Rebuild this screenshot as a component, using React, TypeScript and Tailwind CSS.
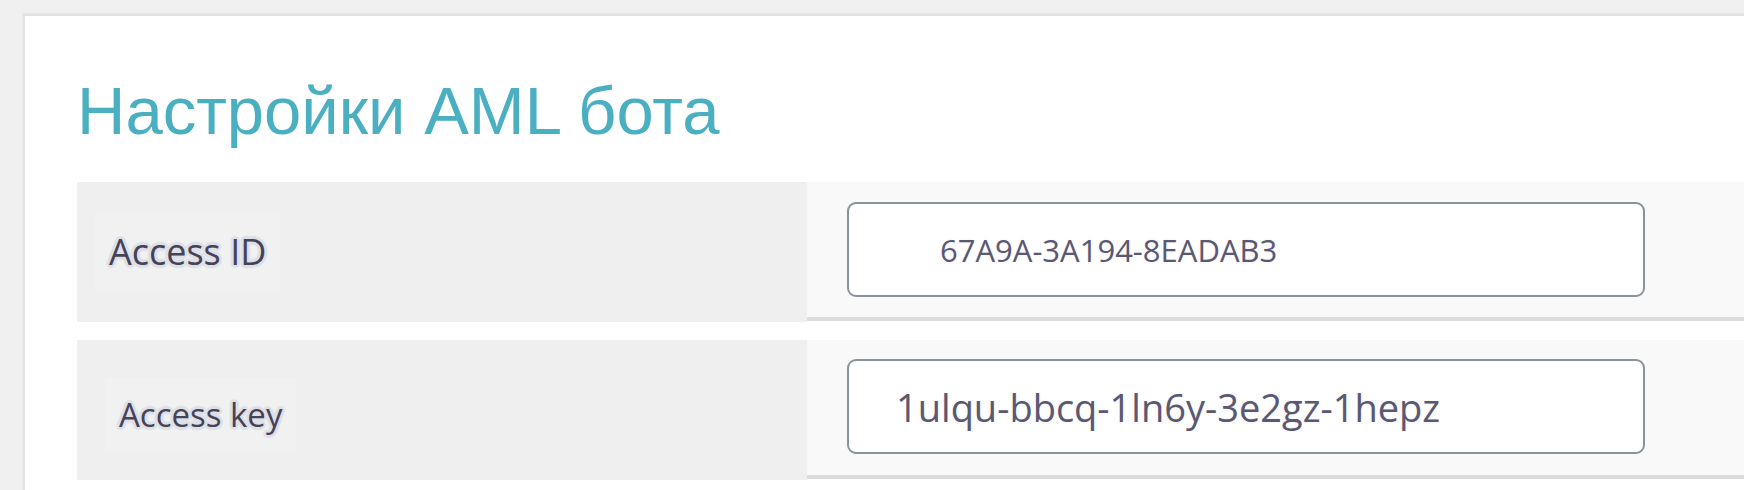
const halo =
    "[text-shadow:3px_0_1px_#dde0e6,-3px_0_1px_#dde0e6,0_3px_1px_#dde0e6,0_-3px_1px_#dde0e6,2px_2px_1px_#dde0e6,-2px_2px_1px_#dde0e6,2px_-2px_1px_#dde0e6,-2px_-2px_1px_#dde0e6,0_0_4px_#dde0e6]";

function Row({ label, value, cellClass, labelSize, inputClass, rowClass }: { label: string, value: string, cellClass: string, labelSize: string, inputClass: string, rowClass: string }) {
    return (
        <div className={`flex items-start ${rowClass}`}>
            <div className={`w-[730px] h-[140px] flex items-center bg-[#efefef] ${cellClass}`}>
                <span className={`bg-[#f1f1f1] px-[14px] py-[12px] leading-normal text-[#474257] font-['Open_Sans',sans-serif] ${labelSize} ${halo}`}>
                    {label}
                </span>
            </div>
            <div className="flex-1 h-[139px] bg-[#f9f9f9] border-b-4 border-[#dcdcdc] pl-[40px]">
                <input
                    type="text"
                    readOnly
                    defaultValue={value}
                    className={`block w-[798px] h-[95px] bg-white border-[2.5px] border-[#8a929b] rounded-[9px] text-[#5b5872] font-['Open_Sans',sans-serif] focus:outline-none [text-shadow:0_0_3px_#eeeef4] ${inputClass}`}
                />
            </div>
        </div>
    );
}

export default function App() {
    return (
        <div className="min-h-[490px] bg-[#f0f0f0] pt-[14px] pl-[23px] overflow-hidden">
            <div className="bg-white border-t-2 border-l-2 border-[#e2e2e2] pl-[52px] pt-[61px] pb-[12px] shadow-[0_-1px_2px_#e6e6e6]">
                <h1 className="text-[67px] leading-none text-[#49afc1] font-['Liberation_Sans',Arial,sans-serif]">
                    Настройки AML бота
                </h1>
                <Row
                    rowClass="mt-[38px]"
                    label="Access ID"
                    value="67A9A-3A194-8EADAB3"
                    cellClass="pl-[18px]"
                    labelSize="text-[36px]"
                    inputClass="mt-[20px] pl-[91px] text-[31px]"
                />
                <Row
                    rowClass="mt-[18px]"
                    label="Access key"
                    value="1ulqu-bbcq-1ln6y-3e2gz-1hepz"
                    cellClass="pl-[28px] pt-[10px]"
                    labelSize="text-[33px]"
                    inputClass="mt-[19px] pl-[47px] text-[38px]"
                />
            </div>
        </div>
    );
}
